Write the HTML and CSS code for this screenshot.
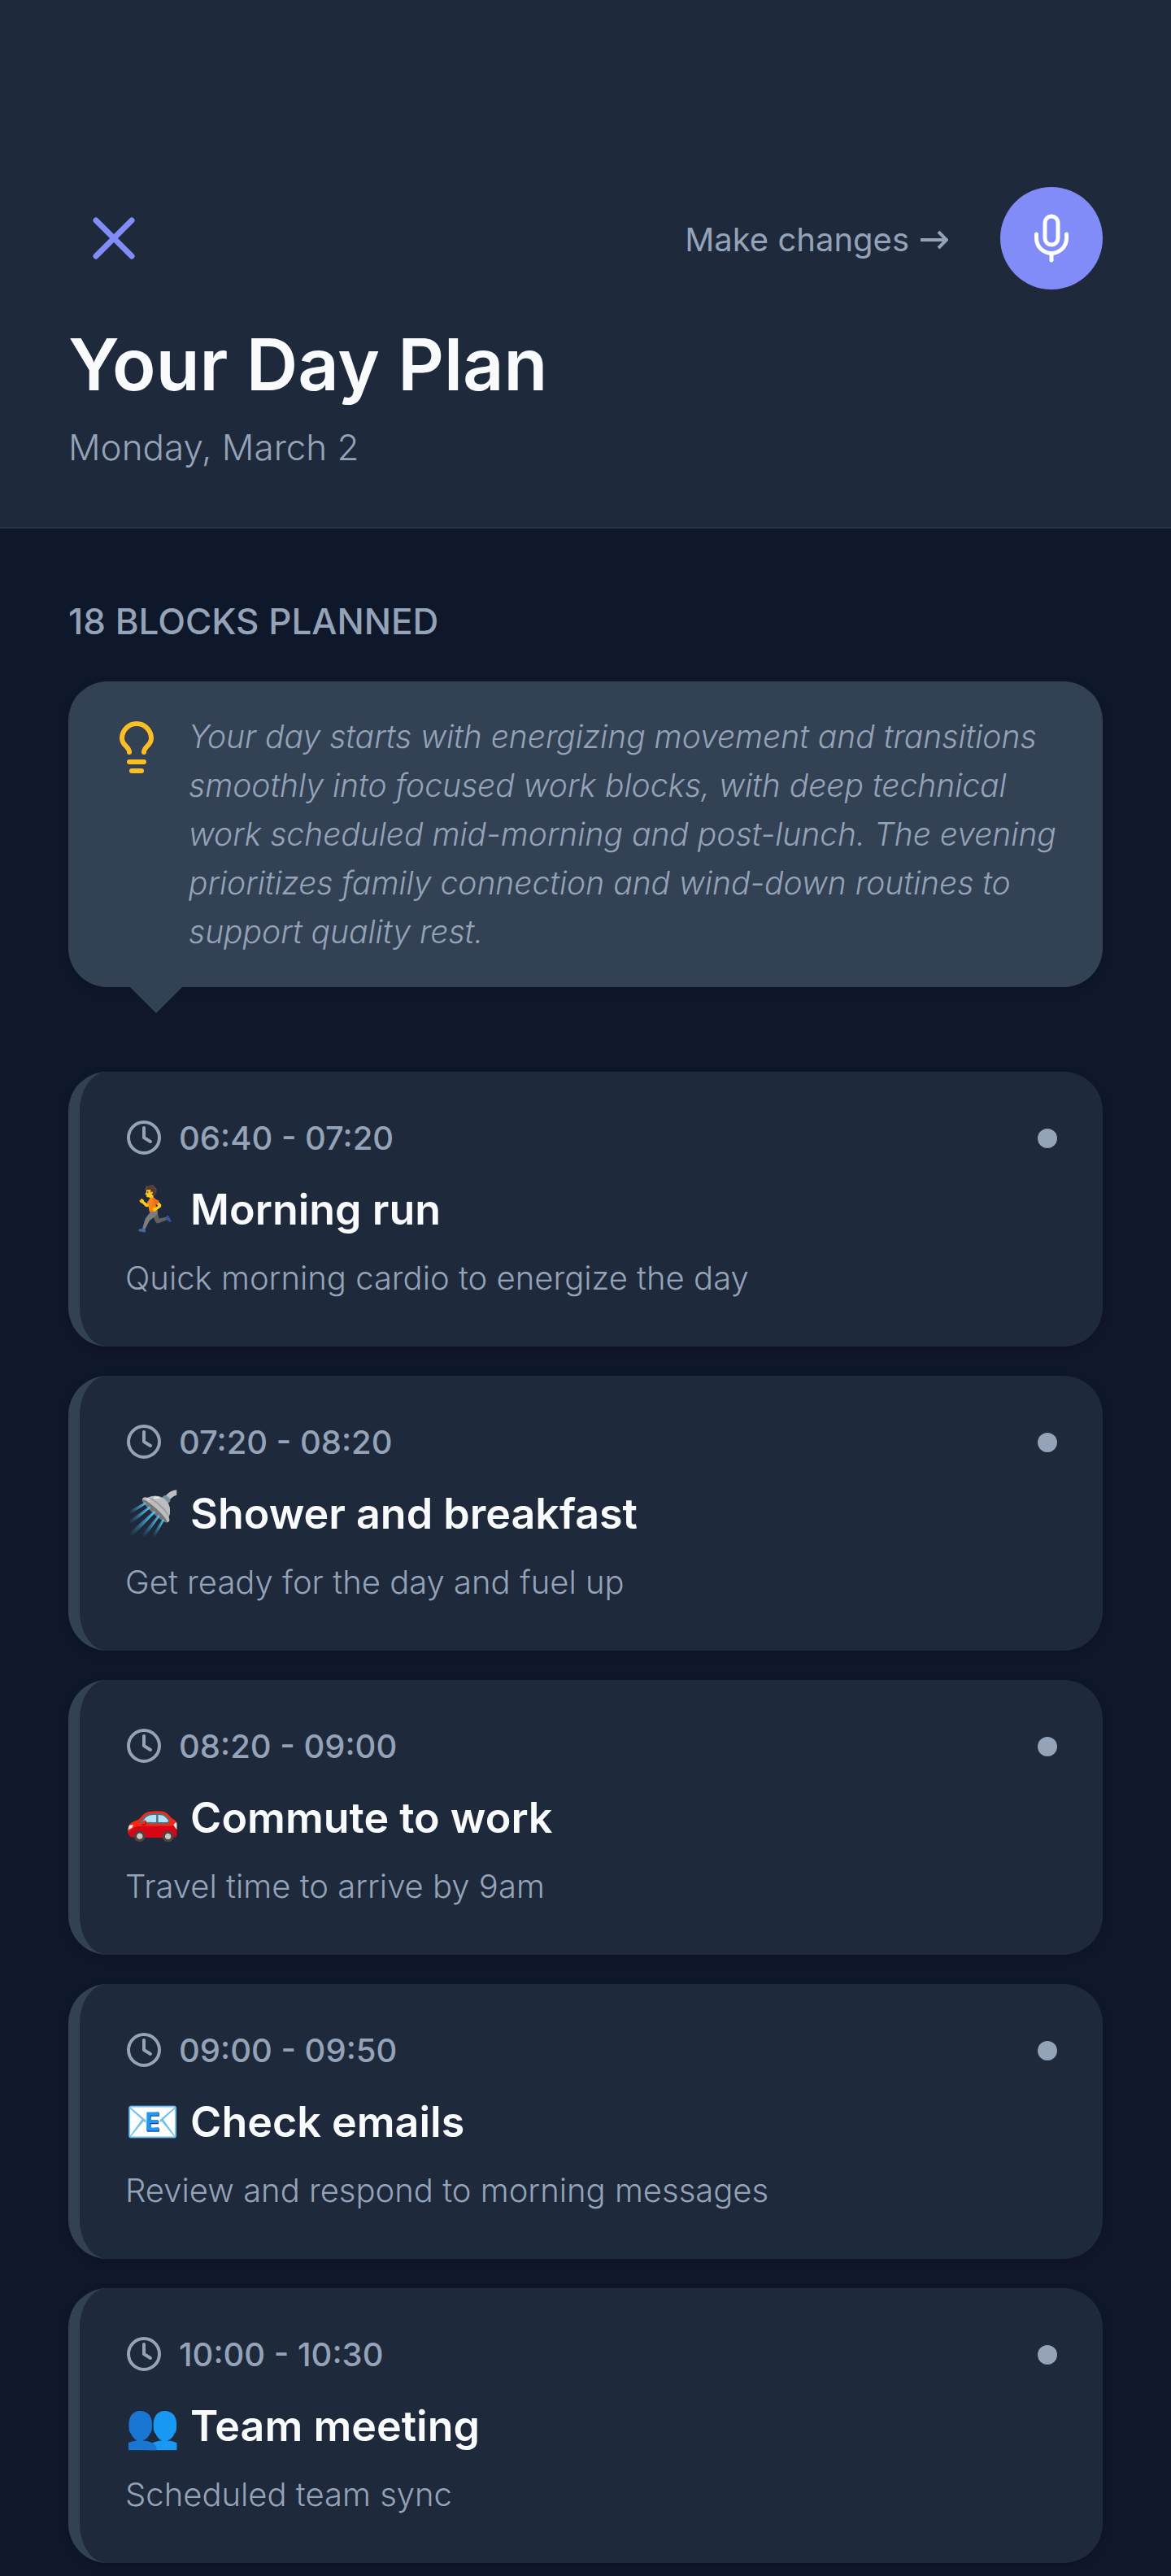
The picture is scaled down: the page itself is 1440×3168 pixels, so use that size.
FILE: index.html
```html
<!DOCTYPE html>
<html lang="en">
<head>
<meta charset="utf-8">
<meta name="viewport" content="width=device-width, initial-scale=1">
<title>Your Day Plan</title>
<link rel="stylesheet" href="styles.css">
</head>
<body>
<svg class="sprite" aria-hidden="true">
  <symbol id="clock" viewBox="0 0 46 46">
    <circle cx="23" cy="22" r="19"/>
    <path d="M23 10v12l8 5"/>
  </symbol>
</svg>
<header class="header">
  <div class="toolbar">
    <button class="close" type="button" aria-label="Close">
      <svg class="close-icon" viewBox="0 0 56 56"><path d="M6 6l44 44M50 6L6 50"/></svg>
    </button>
    <div class="actions">
      <a class="changes" href="#">Make changes
        <svg class="arrow" viewBox="0 0 34 24"><path d="M0 12h32M22 2l10 10-10 10"/></svg>
      </a>
      <button class="mic" type="button" aria-label="Record">
        <svg class="mic-icon" viewBox="0 0 64 64">
          <rect x="24" y="5" width="16" height="35" rx="8"/>
          <path d="M13.500 27v5a18.500 18.500 0 0 0 37 0v-5M32 51v8"/>
        </svg>
      </button>
    </div>
  </div>
  <h1 class="title">Your Day Plan</h1>
  <p class="date">Monday, March 2</p>
</header>
<main class="content">
  <h2 class="label">18 BLOCKS PLANNED</h2>
  <aside class="tip">
    <svg class="bulb" viewBox="0 0 64 72">
      <path d="M23 41c0-7-9-8-9-17a18 18 0 0 1 36 0c0 9-9 10-9 17M23 53h18M26 64h12"/>
    </svg>
    <p class="tip-text">Your day starts with energizing movement and transitions smoothly into focused work blocks, with deep technical work scheduled mid-morning and post-lunch. The evening prioritizes family connection and wind-down routines to support quality rest.</p>
  </aside>
  <ul class="blocks">
    <li class="card">
      <div class="when"><svg class="clock"><use href="#clock"/></svg><time>06:40 - 07:20</time><span class="dot"></span></div>
      <h3 class="name"><span class="emoji">🏃</span> Morning run</h3>
      <p class="desc">Quick morning cardio to energize the day</p>
    </li>
    <li class="card">
      <div class="when"><svg class="clock"><use href="#clock"/></svg><time>07:20 - 08:20</time><span class="dot"></span></div>
      <h3 class="name"><span class="emoji">🚿</span> Shower and breakfast</h3>
      <p class="desc">Get ready for the day and fuel up</p>
    </li>
    <li class="card">
      <div class="when"><svg class="clock"><use href="#clock"/></svg><time>08:20 - 09:00</time><span class="dot"></span></div>
      <h3 class="name"><span class="emoji">🚗</span> Commute to work</h3>
      <p class="desc">Travel time to arrive by 9am</p>
    </li>
    <li class="card">
      <div class="when"><svg class="clock"><use href="#clock"/></svg><time>09:00 - 09:50</time><span class="dot"></span></div>
      <h3 class="name"><span class="emoji">📧</span> Check emails</h3>
      <p class="desc">Review and respond to morning messages</p>
    </li>
    <li class="card">
      <div class="when"><svg class="clock"><use href="#clock"/></svg><time>10:00 - 10:30</time><span class="dot"></span></div>
      <h3 class="name"><span class="emoji">👥</span> Team meeting</h3>
      <p class="desc">Scheduled team sync</p>
    </li>
  </ul>
</main>
</body>
</html>
```
FILE: styles.css
```css
* { box-sizing: border-box; margin: 0; padding: 0; }
body {
  background: #0f172a;
  color: #94a3b8;
  font-family: Inter, "Liberation Sans", sans-serif;
  font-size: 40px;
  line-height: 60px;
}
button { border: 0; background: none; cursor: pointer; }
svg { display: block; fill: none; stroke: currentColor; stroke-linecap: round; stroke-linejoin: round; }
.sprite { position: absolute; width: 0; height: 0; }

.header {
  padding: 230px 84px 68px;
  background: #1e293b;
  border-bottom: 2px solid #263548;
}
.toolbar, .actions, .when { display: flex; align-items: center; }
.toolbar { justify-content: space-between; }
.close { padding: 28px; color: #818cf8; }
.close-icon { width: 56px; height: 56px; stroke-width: 7; }
.actions { gap: 64px; }
.changes {
  display: flex;
  align-items: center;
  gap: 14px;
  padding-top: 4px;
  color: inherit;
  text-decoration: none;
}
.arrow { width: 34px; height: 24px; stroke-width: 4; stroke-linecap: butt; stroke-linejoin: miter; }
.mic {
  display: grid;
  place-items: center;
  width: 126px;
  height: 126px;
  border-radius: 50%;
  background: #818cf8;
  color: #fff;
}
.mic-icon { width: 64px; height: 64px; stroke-width: 5; }
.title {
  margin-top: 36px;
  color: #f8fafc;
  font-size: 88px;
  font-weight: 600;
  line-height: 112px;
}
.date { margin-top: 16px; font-size: 44px; font-weight: 300; }

.content { padding: 84px 84px 16px; }
.label { font-size: 44px; font-weight: 500; }
.tip {
  position: relative;
  display: flex;
  gap: 32px;
  margin-top: 44px;
  padding: 38px 40px 38px 52px;
  border-radius: 48px;
  background: #334155;
  box-shadow: 0 4px 12px rgba(0, 0, 0, 0.15);
}
.tip::after {
  content: "";
  position: absolute;
  top: 100%;
  left: 76px;
  border: 32px solid transparent;
  border-top-color: #334155;
  border-bottom: 0;
}
.bulb { flex: none; width: 64px; height: 72px; margin-top: 8px; color: #fbbf24; stroke-width: 6; }
.tip-text { font-size: 39px; font-style: italic; font-weight: 300; }

.blocks { display: flex; flex-direction: column; gap: 36px; margin-top: 104px; list-style: none; }
.card {
  padding: 52px 56px 54px;
  border-left: 14px solid #334155;
  border-radius: 48px;
  background: #1e293b;
  box-shadow: 0 4px 12px rgba(0, 0, 0, 0.15);
}
.when { gap: 20px; font-weight: 500; }
.clock { width: 46px; height: 46px; stroke-width: 4; }
.dot { width: 24px; height: 24px; margin-left: auto; border-radius: 50%; background: #94a3b8; }
.name { margin-top: 20px; color: #f8fafc; font-size: 52px; font-weight: 600; line-height: 76px; }
.emoji { font-size: 54px; line-height: 1; }
.desc { margin-top: 16px; font-weight: 300; }
```
